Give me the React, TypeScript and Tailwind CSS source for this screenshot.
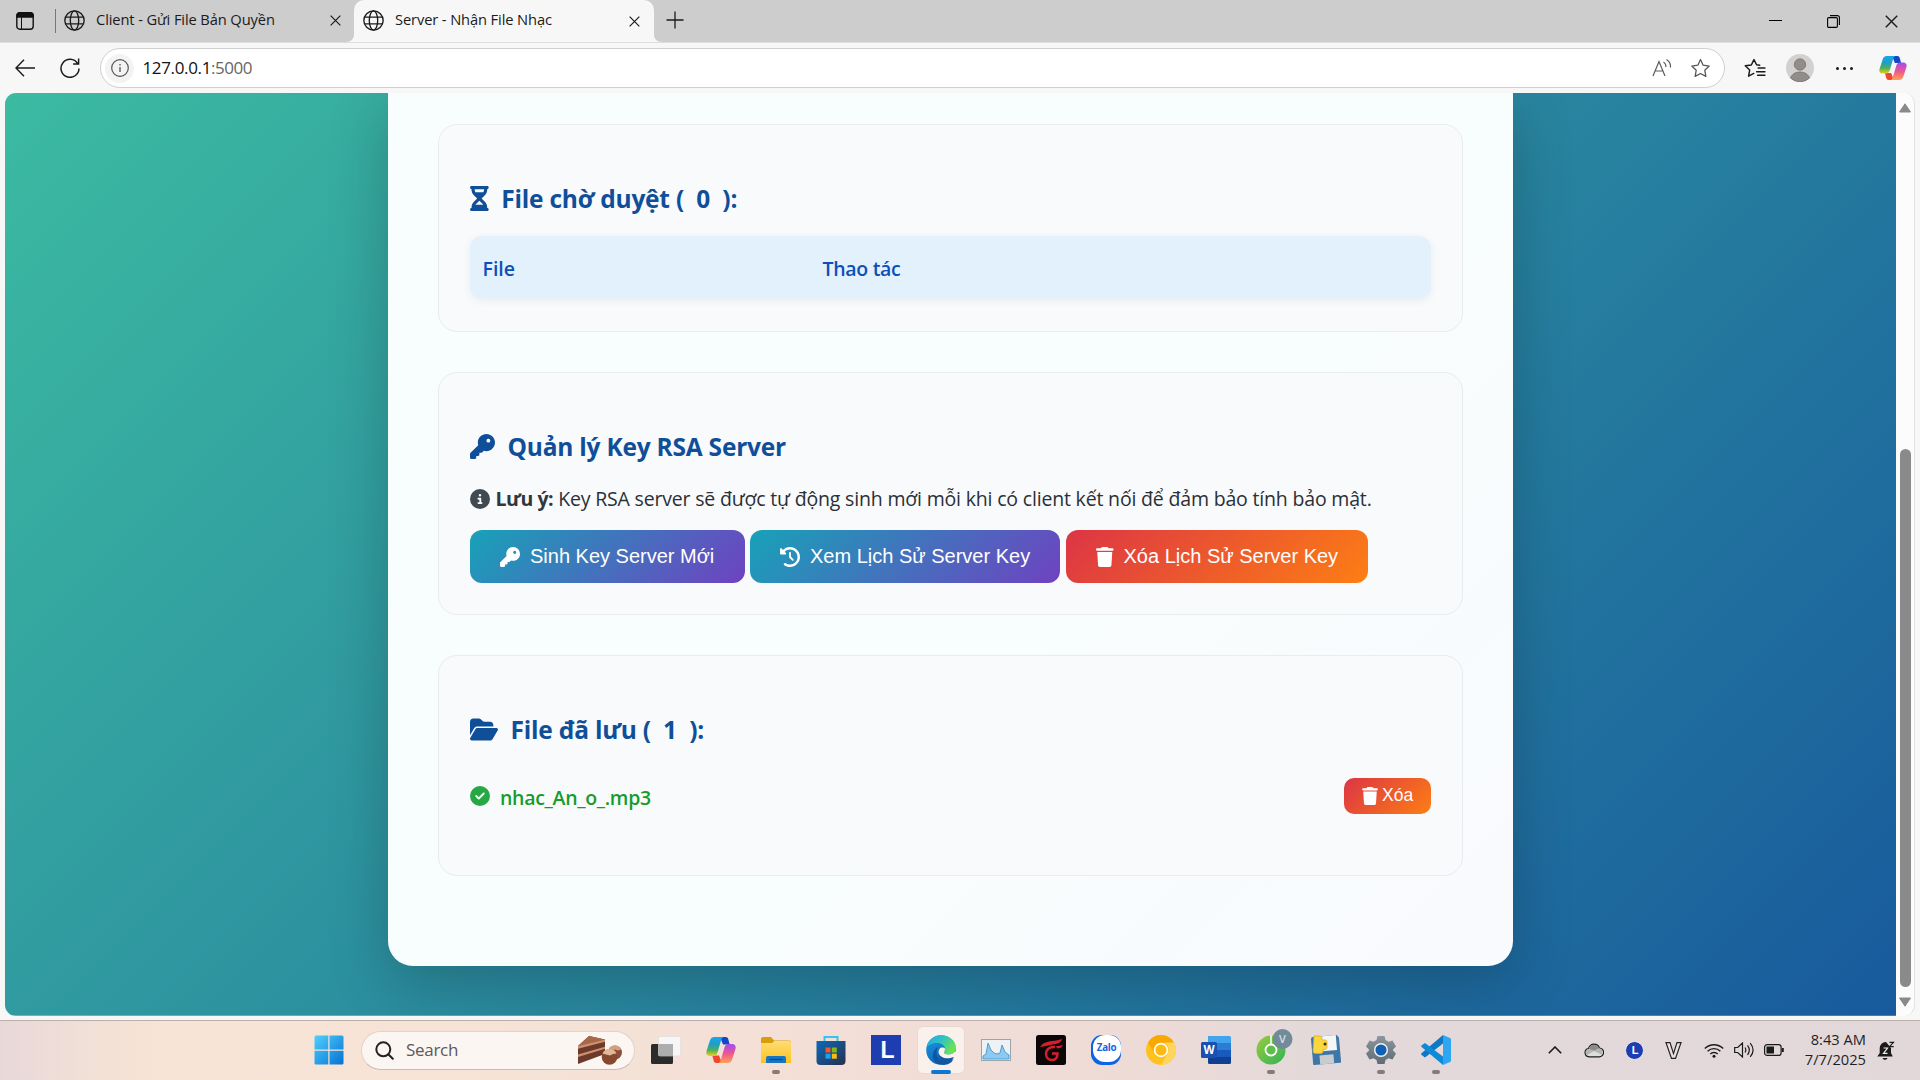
import type { ReactNode } from 'react';
import {
  FaCircleCheck,
  FaCircleInfo,
  FaClockRotateLeft,
  FaFolderOpen,
  FaHourglassHalf,
  FaKey,
  FaTrash,
} from 'react-icons/fa6';

/* ---------- Browser chrome icons ---------- */

function GlobeIcon() {
  return (
    <svg viewBox="0 0 20 20" className="mb-px h-[21px] w-[21px] shrink-0" fill="none" stroke="#1b1b1b" strokeWidth="1.3">
      <circle cx="10" cy="10" r="9.2" />
      <ellipse cx="10" cy="10" rx="4" ry="9.2" />
      <path d="M1.6 6.8h16.8M1.6 13.2h16.8" />
    </svg>
  );
}

function CrossIcon({ className }: { className: string }) {
  return (
    <svg viewBox="0 0 12 12" className={className} fill="none" stroke="#1b1b1b" strokeWidth="1.3">
      <path d="M.7.7l10.6 10.6M11.3.7L.7 11.3" />
    </svg>
  );
}

function CopilotIcon({ className, id }: { className: string; id: string }) {
  return (
    <svg viewBox="0 0 30 28" className={className}>
      <defs>
        <linearGradient id={id + 'a'} x1="0" y1="0" x2="0" y2="1">
          <stop offset="0" stopColor="#1ba4ee" />
          <stop offset=".4" stopColor="#1f9fc4" />
          <stop offset=".7" stopColor="#52b153" />
          <stop offset="1" stopColor="#f2cf1c" />
        </linearGradient>
        <linearGradient id={id + 'b'} x1="0" y1="0" x2="0" y2="1">
          <stop offset="0" stopColor="#a04df0" />
          <stop offset=".5" stopColor="#ee5591" />
          <stop offset="1" stopColor="#ffa254" />
        </linearGradient>
      </defs>
      <path d="M14 1h5.500c2 0 2.600 1.300 3 3l1.200 4.500H17z" fill="#1546c8" />
      <path d="M16 27h-5.500c-2 0-2.600-1.300-3-3l-1.200-4.500H13z" fill="#f0472c" />
      <path d="M8.500 1H18c-1.500.3-2.300 1.300-2.800 3l-3.700 12.500c-.6 2-1.700 3.500-4 3.500H4c-3.200 0-4.300-2.300-3.400-5.300L4 4.300C4.700 2.200 6.200 1 8.500 1z" fill={'url(#' + id + 'a)'} />
      <path d="M21.500 27H12c1.500-.3 2.300-1.300 2.800-3l3.700-12.500c.6-2 1.700-3.500 4-3.500H26c3.200 0 4.300 2.300 3.400 5.300L26 23.700c-.7 2.100-2.200 3.300-4.500 3.300z" fill={'url(#' + id + 'b)'} />
    </svg>
  );
}

/* ---------- Browser chrome ---------- */

function TabStrip() {
  return (
    <div className="flex h-[42px] items-center bg-[#cdcdcd] text-[14.7px] tracking-[-0.12px] text-[#1b1b1b]">
      <svg viewBox="0 0 18 18" className="mb-px ml-4 h-[18px] w-[18px] shrink-0" fill="none" stroke="#111" strokeWidth="1.4">
        <rect x=".8" y=".8" width="16.400" height="16.400" rx="3" />
        <path d="M1 3.200C1 1.800 2 1 3.500 1h11C16 1 17 1.800 17 3.200V5H1z" fill="#111" />
        <path d="M5.500 5v12" strokeWidth="1" />
      </svg>
      <div className="ml-[21px] h-6 w-px bg-[#777]" />
      <div className="flex w-[298px] items-center pl-2">
        <GlobeIcon />
        <span className="ml-[11px] w-[234px] pb-[3px] whitespace-nowrap">Client - Gửi File Bản Quyền</span>
        <CrossIcon className="h-[11px] w-[11px]" />
      </div>
      <div className="relative flex h-full w-[300px] items-center rounded-t-[10px] bg-[#f7f7f7] pl-[9px]">
        <GlobeIcon />
        <span className="ml-[11px] w-[234px] pb-[3px] whitespace-nowrap">Server - Nhận File Nhạc</span>
        <CrossIcon className="h-[11px] w-[11px]" />
        <svg viewBox="0 0 8 8" className="absolute -left-2 bottom-0 h-2 w-2"><path d="M8 0v8H0c5 0 8-3 8-8z" fill="#f7f7f7" /></svg>
        <svg viewBox="0 0 8 8" className="absolute -right-2 bottom-0 h-2 w-2"><path d="M0 0v8h8C3 8 0 5 0 0z" fill="#f7f7f7" /></svg>
      </div>
      <svg viewBox="0 0 18 18" className="mb-[3px] ml-[12px] h-[18px] w-[18px]" stroke="#1b1b1b" strokeWidth="1.300"><path d="M9 .5v17M.5 9h17" /></svg>
      <div className="ml-auto flex items-center gap-[45px] pr-[22px]">
        <div className="mb-px h-px w-[13px] bg-black" />
        <svg viewBox="0 0 13 13" className="h-[13px] w-[13px]" fill="none" stroke="#000" strokeWidth="1.100">
          <rect x=".6" y="2.600" width="9.800" height="9.800" rx="1.200" />
          <path d="M3 .6h7.400a2 2 0 012 2V10" />
        </svg>
        <CrossIcon className="h-[13px] w-[13px]" />
      </div>
    </div>
  );
}

const STAR = 'M10 1.500l2.500 5.300 5.800.8-4.200 4.100 1 5.800L10 14.700l-5.100 2.800 1-5.800L1.700 7.600l5.800-.8z';

function Toolbar() {
  return (
    <div className="flex h-[51px] items-center border-t border-[#dedede] bg-[#f7f7f7]">
      <svg viewBox="0 0 20 18" className="ml-[15px] h-[18px] w-5" fill="none" stroke="#1b1b1b" strokeWidth="1.400"><path d="M9 .8L1 9l8 8.200M1 9h19" /></svg>
      <svg viewBox="0 0 20 20" className="ml-[25px] h-5 w-5" fill="none" stroke="#1b1b1b" strokeWidth="1.500">
        <path d="M17.600 5.500A9 9 0 1019 10.500M18.600.5v5.500h-5.500" />
      </svg>
      <div className="ml-5 flex h-10 w-[1625px] items-center rounded-full border border-[#cfcfcf] bg-white">
        <div className="ml-[4px] flex h-[29px] w-[29px] items-center justify-center rounded-full bg-[#f3f3f3]">
          <svg viewBox="0 0 18 18" className="h-[18px] w-[18px]" fill="none" stroke="#555" strokeWidth="1.200">
            <circle cx="9" cy="9" r="8.300" />
            <path d="M9 8v5M9 5v1.400" strokeWidth="1.300" />
          </svg>
        </div>
        <span className="ml-[8.5px] whitespace-nowrap text-[17px] tracking-[-0.35px] text-[#111]">
          127.0.0.1<span className="tracking-[-0.5px] text-[#666]">:5000</span>
        </span>
        <svg viewBox="0 0 20 18" className="mb-px ml-auto h-[18px] w-5" fill="none" stroke="#5c5c5c" strokeWidth="1.200">
          <path d="M1 17L7 2.500 13 17M3 12h8M11.500 3c1.800 1.200 2.500 3.200 2.500 5M14.500.5c3 2 4.300 5 4 8" />
        </svg>
        <svg viewBox="0 0 20 19" className="mr-[13px] ml-[18px] h-5 w-[21px]" fill="none" stroke="#555" strokeWidth="1.200" strokeLinejoin="round"><path d={STAR} /></svg>
      </div>
      <svg viewBox="0 0 21 19" className="ml-[19px] h-5 w-[22px]" fill="none" stroke="#1b1b1b" strokeWidth="1.400" strokeLinejoin="round" strokeLinecap="round">
        <path d="M15 6.800l-3-.4L9.500 1.500 7 6.600l-5.800.8 4.200 4.100-1 5.800 4.900-2.600M13.500 9.500H20M12 13h8M13 16.500h7" />
      </svg>
      <svg viewBox="0 0 28 28" className="ml-[20px] h-7 w-7">
        <circle cx="14" cy="14" r="14" fill="#d3d1cf" />
        <circle cx="14" cy="10.500" r="5.700" fill="#918d8a" stroke="#75716e" strokeWidth=".8" />
        <path d="M4.500 24C6 20 9.500 18 14 18s8 2 9.500 6a14 14 0 01-19 0z" fill="#918d8a" stroke="#75716e" strokeWidth=".8" />
      </svg>
      <div className="ml-[22px] flex gap-1">
        <i className="h-[3px] w-[3px] rounded-full bg-[#1b1b1b]" />
        <i className="h-[3px] w-[3px] rounded-full bg-[#1b1b1b]" />
        <i className="h-[3px] w-[3px] rounded-full bg-[#1b1b1b]" />
      </div>
      <CopilotIcon className="ml-[26px] h-[26px] w-7" id="cpA" />
    </div>
  );
}

/* ---------- Page ---------- */

function Card({ className, children }: { className: string; children: ReactNode }) {
  return (
    <section className={'flex flex-col rounded-[19px] border border-[#e9ecef] bg-[#f9fafc] px-[31px] ' + className}>
      {children}
    </section>
  );
}

function Heading({ icon, children }: { icon: ReactNode; children: ReactNode }) {
  return (
    <h2 className="flex h-[34px] shrink-0 items-center gap-[12.5px] whitespace-pre text-[24.5px] leading-[34px] font-bold tracking-[-0.22px] text-[#0f4f9a]">
      {icon}
      <span>{children}</span>
    </h2>
  );
}

function ActionButton({ icon, className, children }: { icon: ReactNode; className: string; children: ReactNode }) {
  return (
    <button
      className={
        "flex h-[53px] shrink-0 items-center gap-[10px] rounded-xl pl-[30px] font-['Liberation_Sans',sans-serif] text-[20px] leading-[24px] whitespace-nowrap text-white " +
        className
      }
    >
      {icon}
      <span className="pb-[2px]">{children}</span>
    </button>
  );
}

function ServerPage() {
  return (
    <main className="h-[923px] w-[1891px] overflow-hidden rounded-l-[11px] bg-[linear-gradient(135deg,#43cea2,#185a9d)] bg-[length:1891px_1498px] bg-[position:0_-576px]">
      <div className="ml-[383px] h-[873px] w-[1125px] rounded-b-[25px] bg-[linear-gradient(135deg,#f8fdfd,#f8fdfd_60%,#f9fafd)] px-[50px] pt-[31px] shadow-[0_16px_60px_rgba(0,0,0,0.22)]">
        <Card className="h-[207.5px] pt-[57px]">
          <Heading icon={<FaHourglassHalf className="mb-[2px] h-[25px] w-[18.75px]" />}>File chờ duyệt (  0  ):</Heading>
          <div className="mt-[20px] flex h-[63px] items-center rounded-xl bg-[#e3f1fd] px-[12.5px] pt-[3px] text-[19.5px] leading-7 font-semibold text-[#0d4fb8] shadow-[0_2px_10px_rgba(0,0,0,0.06)]">
            <div className="w-[340px]">File</div>
            <div className="tracking-[-0.3px]">Thao tác</div>
          </div>
        </Card>

        <Card className="mt-[40.5px] h-[243px] pt-[57px]">
          <Heading icon={<FaKey className="mb-[2px] h-[25px] w-[25px]" />}>Quản lý Key RSA Server</Heading>
          <p className="mt-[21px] flex items-center whitespace-nowrap text-[19.5px] leading-7 tracking-[-0.18px] text-[#2a3036]">
            <FaCircleInfo className="mr-[5.5px] h-5 w-5 text-[#414a50]" />
            <strong className="mr-[5px] tracking-[-0.45px] text-[#2f383e]">Lưu ý:</strong>
            <span>Key RSA server sẽ được tự động sinh mới mỗi khi có client kết nối để đảm bảo tính bảo mật.</span>
          </p>
          <div className="mt-[17px] flex gap-[5px]">
            <ActionButton className="w-[275px] bg-[linear-gradient(135deg,#17a2b8,#6f42c1)]" icon={<FaKey className="h-5 w-5" />}>Sinh Key Server Mới</ActionButton>
            <ActionButton className="w-[310px] bg-[linear-gradient(135deg,#17a2b8,#6f42c1)]" icon={<FaClockRotateLeft className="h-5 w-5" />}>Xem Lịch Sử Server Key</ActionButton>
            <ActionButton className="ml-px w-[302px] bg-[linear-gradient(135deg,#dc3545,#fd7e14)]" icon={<FaTrash className="h-5 w-[17.5px]" />}>Xóa Lịch Sử Server Key</ActionButton>
          </div>
        </Card>

        <Card className="mt-[40px] h-[221px] pt-[57px]">
          <Heading icon={<FaFolderOpen className="mb-px h-[25px] w-[28px]" />}>File đã lưu (  1  ):</Heading>
          <div className="mt-[31px] flex h-9 items-center text-[#169c2c]">
            <FaCircleCheck className="mb-px h-5 w-5 text-[#28a745]" />
            <span className="ml-[10px] pt-[3px] text-[19.5px] leading-7 font-semibold tracking-[-0.3px]">nhac_An_o_.mp3</span>
            <button className="ml-auto flex h-9 w-[87px] items-center gap-1 rounded-[10px] bg-[linear-gradient(135deg,#dc3545,#fd7e14)] pl-[18px] font-['Liberation_Sans',sans-serif] text-[17.5px] text-white">
              <FaTrash className="mb-px h-[18px] w-[16px]" />
              <span className="pb-px">Xóa</span>
            </button>
          </div>
        </Card>
      </div>
    </main>
  );
}

function ScrollBar() {
  return (
    <div className="flex h-[923px] w-[19px] flex-col items-center rounded-r-[11px] border-r border-[#e2e2e2] bg-[#fcfcfc]">
      <svg viewBox="0 0 12 10" className="mt-[10px] h-[10px] w-3"><path d="M6 .8l5.500 8.200H.5z" fill="#8a8a8a" stroke="#8a8a8a" strokeLinejoin="round" /></svg>
      <div className="mt-[336px] h-[538px] w-[11px] rounded-full bg-[#8a8a8a]" />
      <svg viewBox="0 0 12 10" className="mt-[10px] h-[10px] w-3"><path d="M6 9.200l5.500-8.200H.5z" fill="#8a8a8a" stroke="#8a8a8a" strokeLinejoin="round" /></svg>
    </div>
  );
}

/* ---------- Taskbar ---------- */

function App30({ children, open, active }: { children: ReactNode; open?: boolean; active?: boolean }) {
  return (
    <div className="flex w-[55px] justify-center">
      <div className={'relative flex h-12 w-12 items-center justify-center rounded-md ' + (active ? 'border border-[#ead9d2] bg-[#faf1ec]' : '')}>
        {children}
        {open && <i className="absolute bottom-0 h-1 w-2 rounded-full bg-[#857b78]" />}
        {active && <i className="absolute -bottom-px h-1 w-5 rounded-full bg-[#0c77d6]" />}
      </div>
    </div>
  );
}

function Pic({ children }: { children: ReactNode }) {
  return <svg viewBox="0 0 30 30" className="h-[30px] w-[30px] overflow-visible">{children}</svg>;
}

function Gradients() {
  return (
    <svg className="absolute h-0 w-0">
      <defs>
        <linearGradient id="win" x1="0" y1="0" x2="1" y2="1"><stop offset="0" stopColor="#4fd0ff" /><stop offset="1" stopColor="#0571d3" /></linearGradient>
        <linearGradient id="folder" x1="0" y1="0" x2="0" y2="1"><stop offset="0" stopColor="#ffdd74" /><stop offset="1" stopColor="#fcc31f" /></linearGradient>
        <linearGradient id="store" x1="0" y1="0" x2="1" y2="1"><stop offset="0" stopColor="#0b6bb8" /><stop offset="1" stopColor="#2a2e4d" /></linearGradient>
        <linearGradient id="edgeTop" x1="0" y1="0" x2="1" y2=".5"><stop offset="0" stopColor="#2aa4e0" /><stop offset=".5" stopColor="#2fc2c8" /><stop offset="1" stopColor="#6be34f" /></linearGradient>
        <linearGradient id="edgeMid" x1="0" y1="0" x2=".5" y2="1"><stop offset="0" stopColor="#1b9de2" /><stop offset="1" stopColor="#0c62b8" /></linearGradient>
        <linearGradient id="cake" x1="0" y1="0" x2="0" y2="1"><stop offset="0" stopColor="#a8694a" /><stop offset="1" stopColor="#6f3e2b" /></linearGradient>
        <linearGradient id="coc" x1="0" y1="0" x2="1" y2="1"><stop offset="0" stopColor="#9acb3c" /><stop offset="1" stopColor="#2fb457" /></linearGradient>
        <linearGradient id="gear" x1="0" y1="0" x2="0" y2="1"><stop offset="0" stopColor="#8d969e" /><stop offset="1" stopColor="#5f6b75" /></linearGradient>
      </defs>
    </svg>
  );
}

function SearchBox() {
  return (
    <div className="ml-[6px] flex h-[39px] w-[274px] items-center rounded-full border border-[#e3d2c8] border-b-[#cbbcb3] bg-[#fcf6f2]">
      <svg viewBox="0 0 19 19" className="ml-[13px] h-[19px] w-[19px]" fill="none" stroke="#222" strokeWidth="2" strokeLinecap="round"><circle cx="8.300" cy="8.300" r="7" /><path d="M13.500 13.500l4.300 4.300" /></svg>
      <span className="ml-[12px] text-[17px] tracking-[-0.3px] text-[#5d5957]">Search</span>
      <svg viewBox="0 0 46 30" className="mr-[11px] ml-auto h-[30px] w-[46px]">
        <path d="M1 11L12 1l16 3.500V19L1 29z" fill="#6b3a2a" />
        <path d="M1 11L12 1l16 3.500z" fill="#a8694a" />
        <path d="M1 11L28 4.500v2.300L1 13.800z" fill="#d09070" />
        <path d="M1 19.500l27-7.700v2L1 22z" fill="#d09070" />
        <circle cx="38" cy="17.500" r="7" fill="#8a5138" />
        <path d="M31.800 14.500c1-5.500 11-5.500 12.300 0l-3 1-3-1-3 1.500z" fill="#d0a080" />
        <circle cx="32.500" cy="22" r="7.800" fill="#84492f" />
        <path d="M25.500 18.500c2-6 12-6 14 0l-3.500.5-3 1.500-4-1z" fill="#e0b898" />
      </svg>
    </div>
  );
}

function Taskbar() {
  return (
    <footer className="flex h-[60px] items-center border-t border-[#b9afab] bg-[linear-gradient(90deg,#e8d8d9_0px,#f1e0d6_90px,#f7e4d5_170px,#f6e3d6_500px,#f3dfd6_800px,#eedbd6_1130px,#e3d9da_1320px,#e3d8d9_1920px)] pb-px">
      <Gradients />
      <div className="ml-[302px] flex w-[53px] justify-center">
        <Pic>
          <path d="M2 .5h12.300v14H.5V2A1.500 1.500 0 012 .5zM15.500.5H28A1.500 1.500 0 0129.500 2v12.500h-14zM.5 15.700h13.800v13.800H2A1.500 1.500 0 01.5 28zM15.500 15.700h14V28a1.500 1.500 0 01-1.500 1.500H15.500z" fill="url(#win)" />
        </Pic>
      </div>
      <SearchBox />
      <div className="ml-[3px] flex">
        <App30>
          <Pic>
            <rect x="0" y="9" width="22" height="20" rx="1.500" fill="#2b2b2b" />
            <rect x="7.500" y="1.500" width="22" height="19.500" rx="1.500" fill="#f6f6f6" stroke="#dcdcdc" strokeWidth=".6" />
            <path d="M7.500 9H22v12H9a1.500 1.500 0 01-1.500-1.500z" fill="#adadad" />
          </Pic>
        </App30>
        <App30><CopilotIcon className="h-7 w-[30px]" id="cpB" /></App30>
        <App30 open>
          <Pic>
            <path d="M0 4a2 2 0 012-2h8l3 3.500h15a2 2 0 012 2V12H0z" fill="#d99d0c" />
            <path d="M0 8h11l2.500-2H28a2 2 0 012 2v20H0z" fill="url(#folder)" />
            <path d="M5 28v-5a2 2 0 012-2h16a2 2 0 012 2v5z" fill="#1676c4" />
            <path d="M8.500 24.500h13" stroke="#0b4a86" strokeWidth="1.300" />
          </Pic>
        </App30>
        <App30>
          <Pic>
            <path d="M8.500 7V2h13v5" fill="none" stroke="#35c3f2" strokeWidth="2" />
            <path d="M.5 6h29v20a4 4 0 01-4 4h-21a4 4 0 01-4-4z" fill="url(#store)" />
            <path d="M9.500 12.500H14.500v5h-5z" fill="#f2562a" /><path d="M15.800 12.500h5v5h-5z" fill="#7dba1a" />
            <path d="M9.500 18.700h5v5h-5z" fill="#18a4ec" /><path d="M15.800 18.700h5v5h-5z" fill="#fcba14" />
          </Pic>
        </App30>
        <App30>
          <div className="flex h-[30px] w-[30px] items-center justify-center bg-[#1d3db0] pl-1 font-['Liberation_Sans',sans-serif] text-[23px] font-bold text-white">L</div>
        </App30>
        <App30 active>
          <Pic>
            <circle cx="15" cy="15" r="14.800" fill="url(#edgeMid)" />
            <path d="M.8 12C2 5 8 .2 15 .2c9 0 15 6.500 15 12.300 0 4.500-3.500 7-7.500 7-3 0-4.500-1-4.500-2 0-.8 1-1.200 1-3.500 0-3.500-3.500-6-8-6-4.500 0-8.500 2-10.200 4z" fill="url(#edgeTop)" />
            <path d="M12 12c-3 5-1 12 4.500 14.500 4.500 2 9 .5 11.500-3-3 6-8 6.700-12 6.300C9 29 6 24 7 19c.6-3.500 2.500-6 5-7z" fill="#1256a3" />
            <path d="M18 17.500c0 1 1.500 2 4.500 2 3 0 5.500-1.300 6.800-3.500l1 1.500-1.800 6c-3 2-8.500 2.500-11.500.5-4-2.500-5.500-7-3.500-10 1.500-2.200 5.500-1.500 5.500 0 0 2.300-1 2.700-1 3.500z" fill="#faf1ec" />
            <path d="M12.500 18c1.500 4.500 8 7 15.300 4-1 2.500-2.300 4.500-4 5.600-5 1-11.300-2.600-11.300-9.600z" fill="#1256a3" />
          </Pic>
        </App30>
        <App30>
          <Pic>
            <rect x=".5" y="4.500" width="29" height="21" fill="#eef2f4" stroke="#9aa4ad" strokeWidth="1" />
            <path d="M2 21l3-2 2-11 3 7 3 3 3 1 3-1 2-8 3 7 4 3v4H2z" fill="#8ec9ee" stroke="#4299d4" strokeWidth=".9" />
          </Pic>
        </App30>
        <App30>
          <Pic>
            <rect width="30" height="30" rx="2.500" fill="#0b0708" />
            <path d="M4 12c3-4.500 6-4.500 9-5.500 4-1 8-.5 13-2.500-1 3.500-3.500 4.500-6.500 5-4 .700-9 2-15.500 3z" fill="#d61f2b" />
            <path d="M20 11c3 0 5.500-.5 7-1.500-1 3-3 4-6 4z" fill="#d61f2b" />
            <path d="M19 12c-5-.5-9 2-9 7 0 3.500 2.500 6 6 6s5.500-2.500 5.500-6.500H16" fill="none" stroke="#d61f2b" strokeWidth="2.400" />
          </Pic>
        </App30>
        <App30>
          <div className="relative flex h-[30px] w-[30px] items-start justify-end rounded-[11px] bg-[#0b64e8]">
            <div className="flex h-[27px] w-[28px] items-center justify-center rounded-[12px] bg-white text-[9.800px] font-bold tracking-[-0.3px] text-[#1467e0]">Zalo</div>
          </div>
        </App30>
        <App30>
          <Pic>
            <circle cx="15" cy="15" r="15" fill="#ffc21c" />
            <path d="M15 0a15 15 0 0113 7.500H15a7.500 7.500 0 00-6.500 11.200L2 7.500A15 15 0 0115 0z" fill="#f9a703" />
            <path d="M28 7.500A15 15 0 0115 30l6.500-11.300A7.500 7.500 0 0019 8z" fill="#ffd55e" />
            <circle cx="15" cy="15" r="7.200" fill="#fff" /><circle cx="15" cy="15" r="5.600" fill="#fdba12" />
          </Pic>
        </App30>
        <App30>
          <Pic>
            <path d="M7 1h21.500A1.500 1.500 0 0130 2.500V8H7z" fill="#41a5ee" /><path d="M7 8h23v7H7z" fill="#2b7cd3" />
            <path d="M7 15h23v7H7z" fill="#185abd" /><path d="M7 22h23v5.500a1.500 1.500 0 01-1.500 1.500h-20A1.500 1.500 0 017 27.500z" fill="#103f91" />
            <rect x="0" y="7" width="16" height="16" rx="1.500" fill="#1a50b0" />
            <text x="8" y="19.200" textAnchor="middle" fontFamily="Open Sans, sans-serif" fontSize="11.500" fontWeight="700" fill="#fff">W</text>
          </Pic>
        </App30>
        <App30 open>
          <Pic>
            <circle cx="15" cy="15" r="14.500" fill="url(#coc)" />
            <path d="M15 15V0" stroke="#fff" strokeWidth="1.500" />
            <circle cx="15" cy="15" r="5.500" fill="#5dbf4a" stroke="#fff" strokeWidth="1.800" />
            <circle cx="26.500" cy="4" r="10" fill="#728b99" />
            <text x="26.500" y="8" textAnchor="middle" fontFamily="Open Sans, sans-serif" fontSize="11" fontWeight="600" fill="#d4dde2">V</text>
          </Pic>
        </App30>
        <App30>
          <Pic>
            <g transform="rotate(-5 15 15)">
              <path d="M1 3a2 2 0 012-2h24l2 3v24a1 1 0 01-1 1H2a1 1 0 01-1-1z" fill="#3f76a8" />
              <path d="M5 1h21v15H5z" fill="#f5f5f5" /><path d="M8 20h14v9H8z" fill="#c9ccce" />
            </g>
            <path d="M3 1h6c1.500 0 2 1 2 2.500V5h3c1.500 0 2 1 2 2.500V12c0 2-1 2.500-3 2.500h-1V16c0 2-1 2.500-3 2.500H4.500C2.500 18.500 2 17 2 15z" fill="#fbd63f" stroke="#d9a91a" strokeWidth=".7" />
            <circle cx="14" cy="9" r="1.500" fill="#333" />
          </Pic>
        </App30>
        <App30 open>
          <Pic>
            <path d="M11.500 1h7l1 4 3 1.800 4-1.200 3.500 6-3 2.900v1l3 2.900-3.500 6-4-1.200-3 1.800-1 4h-7l-1-4-3-1.800-4 1.200-3.500-6 3-2.900v-1L0 11.600l3.500-6 4 1.200 3-1.800z" fill="url(#gear)" />
            <circle cx="15" cy="15" r="6.300" fill="#1260b4" stroke="#f1f1f1" strokeWidth="1.500" />
          </Pic>
        </App30>
        <App30 open>
          <Pic>
            <path d="M22 0l7 3a1.500 1.500 0 011 1.400v21.200a1.500 1.500 0 01-1 1.400l-7 3z" fill="#2fa6f2" />
            <path d="M22 0v8.500L4 22.500l-4-3 .2-1z" fill="#0f78c4" />
            <path d="M22 30v-8.500L4 8 .3 10.500v1.300z" fill="#0e8ad8" />
          </Pic>
        </App30>
      </div>

      <div className="ml-auto flex items-center">
        <svg viewBox="0 0 14 8" className="h-2 w-[14px]" fill="none" stroke="#1b1b1b" strokeWidth="1.600"><path d="M.8 7.200L7 1l6.200 6.200" /></svg>
        <svg viewBox="0 0 20 14" className="ml-[22px] h-[15px] w-5">
          <path d="M5 13.300a4.200 4.200 0 01-.6-8.300C5.500 2.300 7.500.7 10 .7c2.600 0 4.600 1.500 5.400 3.800a4.400 4.400 0 01-.4 8.800z" fill="#dedede" stroke="#1b1b1b" strokeWidth="1.200" />
          <path d="M4.500 5.200C5.500 2.500 7.500 1.300 10 1.300c2.500 0 4.200 1.200 5 3.400l-5 2.800z" fill="#8b8b8b" />
          <path d="M4.500 5.500L10 7.500 3 11.500C.5 9.500 2 6 4.500 5.500zM10 7.500l5-2.500c3 .5 4 4 2.500 6z" fill="#b4b4b4" />
        </svg>
        <div className="ml-[21px] flex h-[19px] w-[19px] items-center justify-center rounded-full border border-[#e9edf9] bg-[#1d3db0] pl-px font-['Liberation_Sans',sans-serif] text-[11px] font-bold text-white">L</div>
        <svg viewBox="0 0 17 17" className="ml-[21px] h-[17px] w-[17px]" fill="#e9e2e2" stroke="#222" strokeWidth="1.200"><path d="M1 .6h4l3.500 11L12 .6h4L10.500 16.400h-4z" /></svg>
        <svg viewBox="0 0 20 15" className="ml-[22px] h-[15px] w-5" fill="none" stroke="#1b1b1b" strokeWidth="1.400">
          <path d="M.8 5.500a13 13 0 0118.400 0M3.600 8.300a9 9 0 0112.800 0M6.300 11a5.300 5.300 0 017.400 0" /><circle cx="10" cy="13.300" r="1.500" fill="#1b1b1b" stroke="none" />
        </svg>
        <svg viewBox="0 0 20 16" className="ml-[10px] h-4 w-5" fill="none" stroke="#1b1b1b" strokeWidth="1.200">
          <path d="M.7 5.500v5h3L8.500 15V1L3.700 5.500zM11 5.500c1 1.500 1 3.500 0 5M13.500 3.300c2.300 3 2.300 6.500 0 9.500M16.200 1.200c3.600 4.300 3.600 9.500 0 13.700" />
        </svg>
        <svg viewBox="0 0 20 12" className="ml-[10px] h-3 w-5" fill="none" stroke="#1b1b1b" strokeWidth="1.200">
          <rect x=".6" y=".6" width="16.500" height="10.800" rx="2.500" /><rect x="2.500" y="2.500" width="7.500" height="7" fill="#1b1b1b" stroke="none" /><path d="M18.800 4v4" strokeWidth="2" />
        </svg>
        <div className="w-[82px] pb-[2px] text-right text-[14.7px] leading-5 text-[#1f1f1f]">
          <div>8:43 AM</div>
          <div>7/7/2025</div>
        </div>
        <svg viewBox="0 0 18 19" className="mr-[25px] ml-[11px] h-[19px] w-[18px]">
          <path d="M9 1a6 6 0 00-6.300 6v5L.3 15.500h15.500L14 12V7z" fill="#1b1b1b" />
          <path d="M5.500 17h5c-.5 1.300-1.500 1.800-2.500 1.800S6 18.300 5.500 17z" fill="#1b1b1b" />
          <path d="M6.500 7h4l-4 5.300h4" fill="none" stroke="#eee" strokeWidth="1.200" />
          <path d="M11 .5h7V7h-4z" fill="#e3d8d9" />
          <path d="M12.500 1.300h4l-4 4.400h4.200" fill="none" stroke="#1b1b1b" strokeWidth="1.200" />
        </svg>
      </div>
    </footer>
  );
}

export default function App() {
  return (
    <div className="flex h-[1080px] w-[1920px] flex-col overflow-hidden bg-[#f7f7f7] font-['Open_Sans','Noto_Sans',sans-serif]">
      <TabStrip />
      <Toolbar />
      <div className="flex h-[927px] px-[5px]">
        <ServerPage />
        <ScrollBar />
      </div>
      <Taskbar />
    </div>
  );
}
